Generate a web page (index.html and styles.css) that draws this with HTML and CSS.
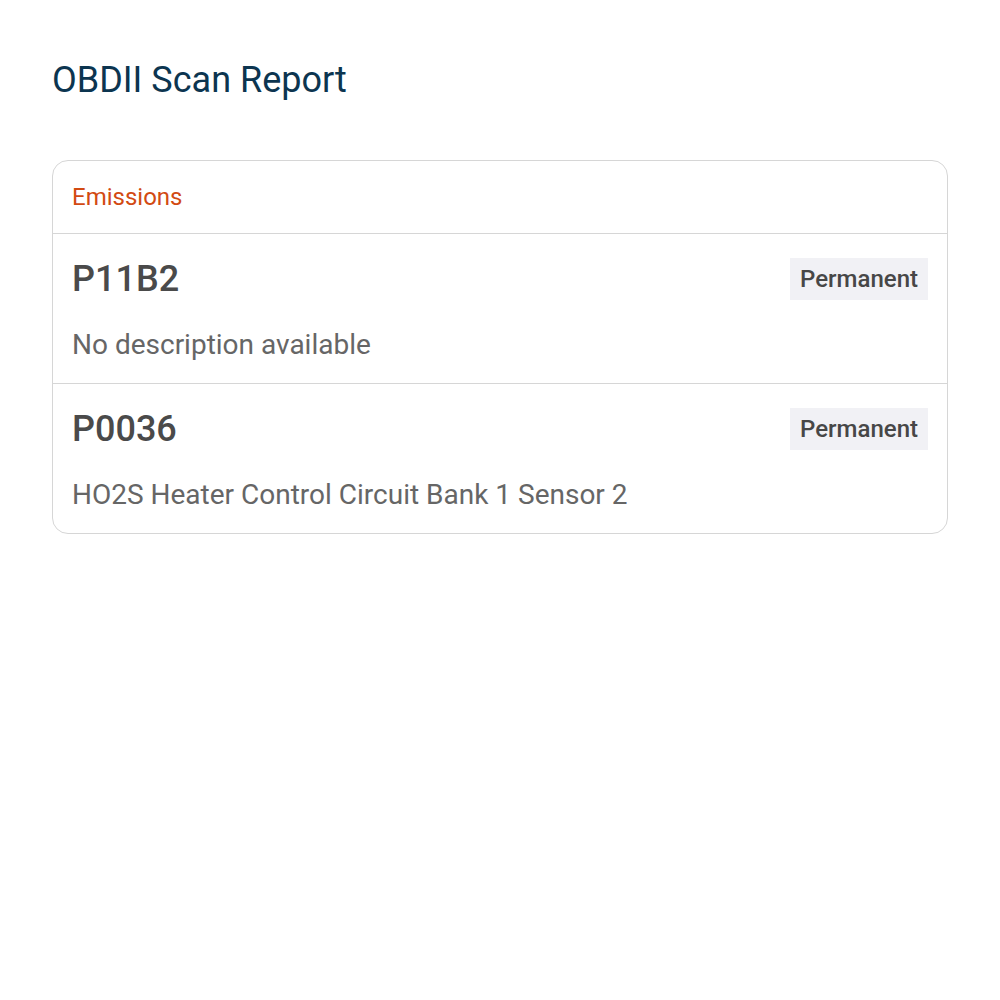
FILE: index.html
```html
<!DOCTYPE html>
<html>
<head>
<meta charset="utf-8">
<link rel="stylesheet" href="styles.css">
</head>
<body>
<main class="page">
  <h1 class="title">OBDII Scan Report</h1>
  <section class="card">
    <header class="card-header">Emissions</header>
    <div class="code-row">
      <div class="code-top">
        <span class="code">P11B2</span>
        <span class="badge">Permanent</span>
      </div>
      <p class="desc">No description available</p>
    </div>
    <div class="code-row">
      <div class="code-top">
        <span class="code">P0036</span>
        <span class="badge">Permanent</span>
      </div>
      <p class="desc">HO2S Heater Control Circuit Bank 1 Sensor 2</p>
    </div>
  </section>
</main>
</body>
</html>
```
FILE: styles.css
```css
html, body {
  margin: 0;
  padding: 0;
  background: #fff;
  font-family: Roboto, "Liberation Sans", sans-serif;
}
.page {
  padding: 52px 52px;
}
.title {
  margin: 0;
  font-size: 36px;
  font-weight: 400;
  line-height: 56px;
  color: #0c3550;
}
.card {
  margin-top: 52px;
  border: 1px solid #d6d6d6;
  border-radius: 16px;
  overflow: hidden;
}
.card-header {
  padding: 0 19px;
  height: 72px;
  display: flex;
  align-items: center;
  font-size: 24px;
  color: #d24a12;
  border-bottom: 1px solid #d6d6d6;
}
.code-row {
  padding: 20px 19px;
  border-bottom: 1px solid #d6d6d6;
}
.code-row:last-child {
  border-bottom: none;
}
.code-top {
  display: flex;
  align-items: center;
  justify-content: space-between;
  height: 50px;
}
.code {
  font-size: 36px;
  font-weight: 500;
  color: #4a4a4a;
}
.badge {
  background: #f1f1f5;
  color: #474747;
  font-size: 24px;
  font-weight: 500;
  padding: 0 10px;
  height: 42px;
  display: flex;
  align-items: center;
}
.desc {
  margin: 23px 0 0;
  font-size: 28px;
  line-height: 36px;
  color: #666;
}
```
